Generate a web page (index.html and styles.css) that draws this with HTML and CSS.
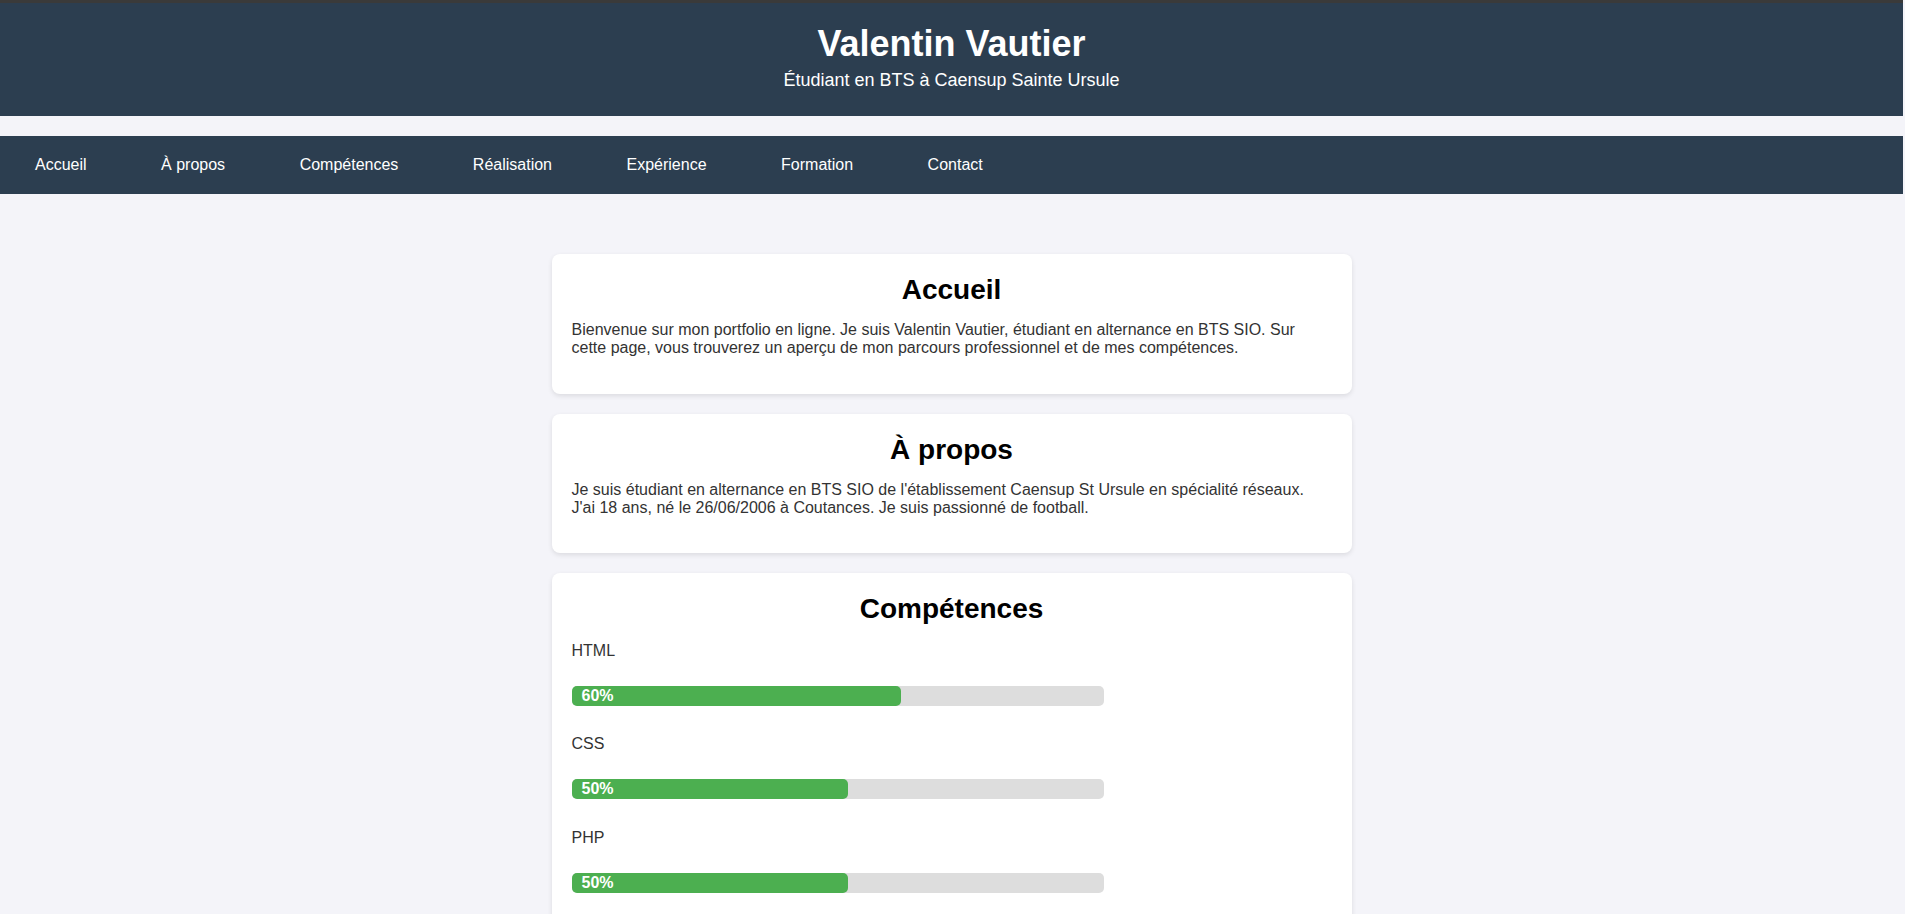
FILE: index.html
```html
<!DOCTYPE html>
<html lang="fr">
<head>
<meta charset="utf-8">
<title>Valentin Vautier - Portfolio</title>
<link rel="stylesheet" href="styles.css">
</head>
<body>
<header class="site-header">
  <h1 class="site-title">Valentin Vautier</h1>
  <p class="site-subtitle">Étudiant en BTS à Caensup Sainte Ursule</p>
</header>
<nav class="site-nav">
  <a href="#accueil">Accueil</a>
  <a href="#apropos">À propos</a>
  <a href="#competences">Compétences</a>
  <a href="#realisation">Réalisation</a>
  <a href="#experience">Expérience</a>
  <a href="#formation">Formation</a>
  <a href="#contact">Contact</a>
</nav>
<main class="content">
  <section class="card" id="accueil">
    <h2 class="card-title">Accueil</h2>
    <p class="card-text">Bienvenue sur mon portfolio en ligne. Je suis Valentin Vautier, étudiant en alternance en BTS SIO. Sur cette page, vous trouverez un aperçu de mon parcours professionnel et de mes compétences.</p>
  </section>
  <section class="card" id="apropos">
    <h2 class="card-title">À propos</h2>
    <p class="card-text">Je suis étudiant en alternance en BTS SIO de l'établissement Caensup St Ursule en spécialité réseaux. J'ai 18 ans, né le 26/06/2006 à Coutances. Je suis passionné de football.</p>
  </section>
  <section class="card" id="competences">
    <h2 class="card-title">Compétences</h2>
    <div class="skills">
      <div class="skill">
        <p class="skill-name">HTML</p>
        <div class="skill-bar"><div class="skill-fill" style="width:60%">60%</div></div>
      </div>
      <div class="skill">
        <p class="skill-name">CSS</p>
        <div class="skill-bar"><div class="skill-fill" style="width:50%">50%</div></div>
      </div>
      <div class="skill">
        <p class="skill-name">PHP</p>
        <div class="skill-bar"><div class="skill-fill" style="width:50%">50%</div></div>
      </div>
      <div class="skill">
        <p class="skill-name">Réseaux</p>
        <div class="skill-bar"><div class="skill-fill" style="width:70%">70%</div></div>
      </div>
    </div>
  </section>
</main>
</body>
</html>
```
FILE: styles.css
```css
html {
  background: #f4f4f9;
}

body {
  margin: 0 2px 0 0;
  border-top: 3px solid #3a3a3a;
  background: #f4f4f9;
  font-family: "Liberation Sans", Arial, sans-serif;
  font-size: 16px;
  color: #333;
}

.site-header {
  background: #2c3e50;
  color: #fff;
  text-align: center;
  padding: 20px 0 25px;
}

.site-title {
  margin: 0;
  font-size: 36px;
  font-weight: bold;
}

.site-subtitle {
  margin: 5px 0 0;
  font-size: 18px;
}

.site-nav {
  margin-top: 20px;
  background: #2c3e50;
  display: flex;
  gap: 34.5px;
  padding: 20px 0 20px 15px;
}

.site-nav a {
  color: #fff;
  text-decoration: none;
  padding: 0 20px;
  line-height: 18px;
}

.content {
  width: 800px;
  margin: 0 auto;
  padding-top: 60px;
}

.card {
  background: #fff;
  border-radius: 8px;
  padding: 20px;
  margin-bottom: 20px;
  box-shadow: 0 2px 5px rgba(0, 0, 0, 0.1);
}

.card-title {
  margin: 0 0 15px;
  font-size: 28px;
  text-align: center;
  color: #000;
}

.card-text {
  margin: 0 0 16.5px;
}

.skills {
  padding-top: 1.5px;
}

.skill {
  margin-bottom: 29.5px;
}

.skill-name {
  margin: 0 0 26px;
}

.skill-bar {
  width: 70%;
  height: 20px;
  background: #dddddd;
  border-radius: 5px;
}

.skill-fill {
  height: 20px;
  line-height: 20px;
  padding-left: 10px;
  background: #4caf50;
  color: #fff;
  font-weight: bold;
  border-radius: 5px;
}
```
